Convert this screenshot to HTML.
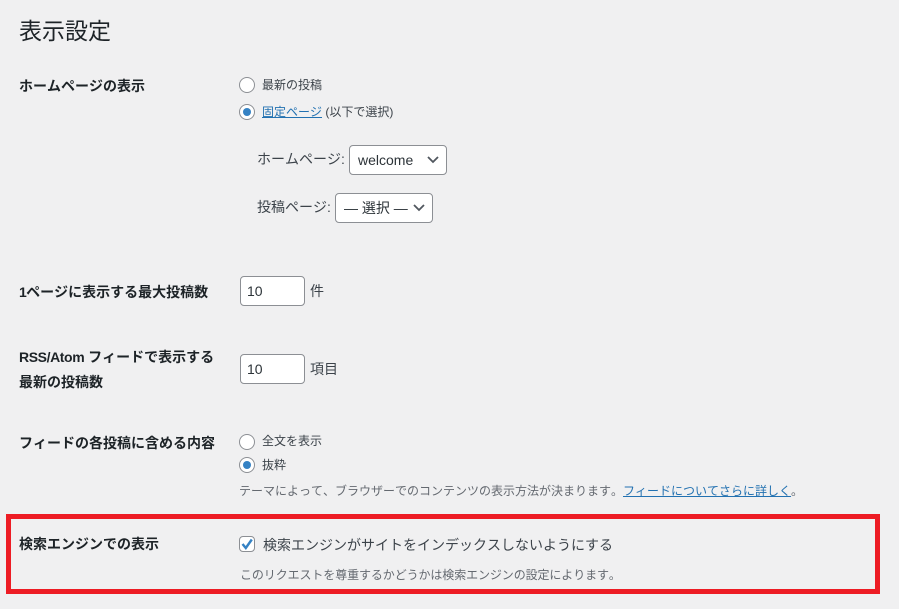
<!DOCTYPE html>
<html lang="ja">
<head>
<meta charset="utf-8">
<style>
html,body{margin:0;padding:0;background:#f0f0f1;}
body{width:899px;height:609px;position:relative;overflow:hidden;font-family:"Liberation Sans","Noto Sans CJK JP",sans-serif;color:#3c434a;font-size:14px;font-kerning:none;}
.t{position:absolute;white-space:nowrap;line-height:20px;}
.h{font-size:23px;color:#1d2327;line-height:30px;}
.b{font-weight:bold;color:#1d2327;font-size:14px;}
.s{font-size:12px;}
.d{font-size:12px;color:#646970;}
a{color:#2271b1;text-decoration:underline;}
.r{position:absolute;width:14px;height:14px;border:1px solid #8c8f94;border-radius:50%;background:#fff;}
.r.on::after{content:"";position:absolute;left:3px;top:3px;width:8px;height:8px;border-radius:50%;background:#3582c4;}
.box{position:absolute;background:#fff;border:1px solid #8c8f94;border-radius:4px;box-sizing:border-box;color:#2c3338;}
.box span{position:absolute;white-space:nowrap;line-height:20px;}
.box svg{position:absolute;}
#red{position:absolute;left:6px;top:514px;width:864px;height:70px;border:5px solid #ed1c24;}
</style>
</head>
<body>
<div class="t h" style="left:19px;top:16px;">表示設定</div>

<div class="t b" style="left:19px;top:76px;">ホームページの表示</div>
<div class="r" style="left:239px;top:77px;"></div>
<div class="t s" style="left:262px;top:75px;">最新の投稿</div>
<div class="r on" style="left:239px;top:104px;"></div>
<div class="t s" style="left:262px;top:102px;"><a>固定ページ</a> (以下で選択)</div>

<div class="t" style="left:257px;top:149px;">ホームページ:</div>
<div class="box" style="left:349px;top:145px;width:98px;height:30px;">
<span style="left:8px;top:4px;font-size:14px;">welcome</span>
<svg style="left:76px;top:8px;" width="14" height="12" viewBox="0 0 14 12"><path d="M2 3 L7 8 L12 3" fill="none" stroke="#50575e" stroke-width="1.8"/></svg>
</div>
<div class="t" style="left:257px;top:197px;">投稿ページ:</div>
<div class="box" style="left:335px;top:193px;width:98px;height:30px;">
<span style="left:8px;top:4px;font-size:14px;">— 選択 —</span>
<svg style="left:76px;top:8px;" width="14" height="12" viewBox="0 0 14 12"><path d="M2 3 L7 8 L12 3" fill="none" stroke="#50575e" stroke-width="1.8"/></svg>
</div>

<div class="t b" style="left:19px;top:282px;"><span style="letter-spacing:-0.7px;">1</span>ページに表示する最大投稿数</div>
<div class="box" style="left:240px;top:276px;width:65px;height:30px;"><span style="left:6px;top:4px;font-size:14px;">10</span></div>
<div class="t" style="left:310px;top:281px;">件</div>

<div class="t b" style="left:19px;top:347px;"><span style="letter-spacing:-0.4px;">RSS/Atom</span> フィードで表示する</div>
<div class="t b" style="left:19px;top:372px;">最新の投稿数</div>
<div class="box" style="left:240px;top:354px;width:65px;height:30px;"><span style="left:6px;top:4px;font-size:14px;">10</span></div>
<div class="t" style="left:310px;top:359px;">項目</div>

<div class="t b" style="left:19px;top:433px;">フィードの各投稿に含める内容</div>
<div class="r" style="left:239px;top:434px;"></div>
<div class="t s" style="left:262px;top:431px;">全文を表示</div>
<div class="r on" style="left:239px;top:457px;"></div>
<div class="t s" style="left:262px;top:455px;">抜粋</div>
<div class="t d" style="left:239px;top:481px;">テーマによって、ブラウザーでのコンテンツの表示方法が決まります。<a>フィードについてさらに詳しく</a>。</div>

<div id="red"></div>
<div class="t b" style="left:19px;top:534px;">検索エンジンでの表示</div>
<div style="position:absolute;left:239px;top:536px;width:14px;height:14px;border:1px solid #8c8f94;border-radius:4px;background:#fff;">
<svg style="position:absolute;left:0;top:0;" width="14" height="14" viewBox="0 0 14 14"><path d="M2.5 7 L5.8 11 L11.8 2.5" fill="none" stroke="#3582c4" stroke-width="2.4"/></svg>
</div>
<div class="t" style="left:263px;top:535px;">検索エンジンがサイトをインデックスしないようにする</div>
<div class="t d" style="left:240px;top:565px;letter-spacing:-0.1px;">このリクエストを尊重するかどうかは検索エンジンの設定によります。</div>
</body>
</html>
